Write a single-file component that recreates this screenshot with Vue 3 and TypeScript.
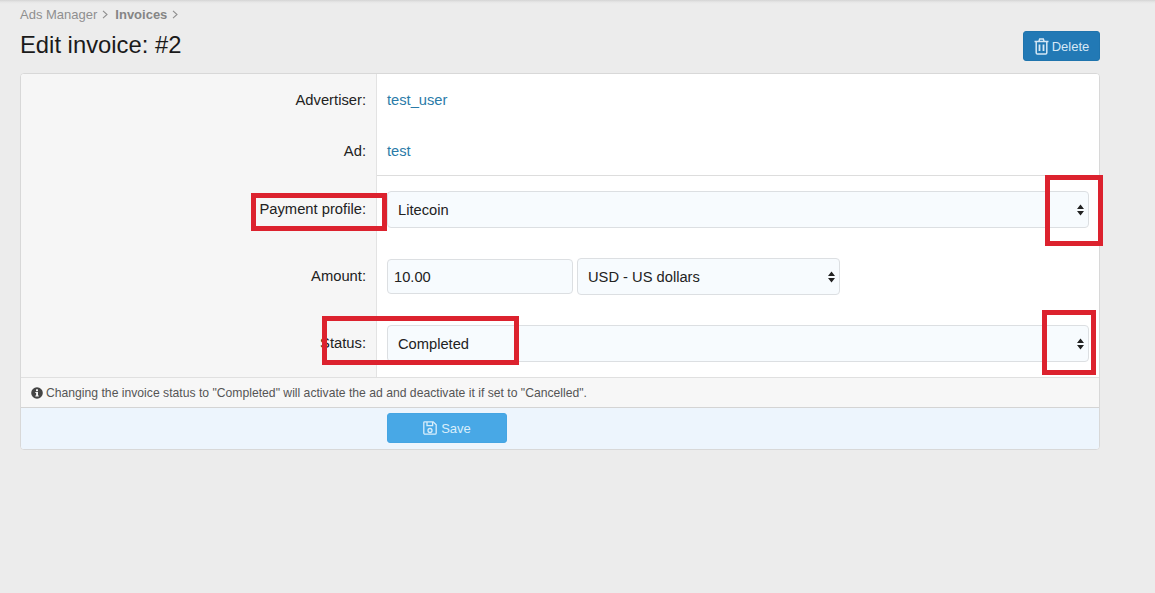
<template>
  <div class="page">
    <div class="crumbs">
      <span>Ads Manager</span>
      <svg class="chev" width="6" height="9" viewBox="0 0 6 9"><path d="M1 .8L5 4.5 1 8.2" /></svg>
      <b>Invoices</b>
      <svg class="chev" width="6" height="9" viewBox="0 0 6 9"><path d="M1 .8L5 4.5 1 8.2" /></svg>
    </div>
    <div class="head">
      <h1>Edit invoice: #2</h1>
      <button class="btn-delete" type="button">
        <svg width="15" height="17" viewBox="0 0 15 17" fill="none" stroke="currentColor" stroke-width="1.5">
          <path d="M.5 3.6h14M4.8 3.4l.9-2.4h3.6l.9 2.4M2.2 3.6v11.1c0 .8.5 1.4 1.2 1.4h8.2c.7 0 1.2-.6 1.2-1.4V3.6" />
          <path d="M5.5 6.5v6.5M9.5 6.5v6.5" stroke-width="1.8" />
        </svg>
        Delete
      </button>
    </div>

    <form class="card" @submit.prevent>
      <div class="rows">
        <div v-for="(item, i) in infoRows" :key="item.label" class="row info" :class="{ last: i === infoRows.length - 1 }">
          <label>{{ item.label }}:</label>
          <div class="value"><a href="#">{{ item.value }}</a></div>
        </div>
        <div class="row field">
          <label>Payment profile:</label>
          <div class="value">
            <div class="select wide">
              <select v-model="profile"><option>Litecoin</option></select>
              <svg class="arrows" width="7" height="12" viewBox="0 0 7 12"><path d="M3.5 0.5L7 5H0zM0 7h7l-3.5 4.5z" /></svg>
            </div>
          </div>
        </div>
        <div class="row field">
          <label>Amount:</label>
          <div class="value amount">
            <input v-model="amount" type="text" />
            <div class="select currency">
              <select v-model="currency"><option>USD - US dollars</option></select>
              <svg class="arrows" width="7" height="12" viewBox="0 0 7 12"><path d="M3.5 0.5L7 5H0zM0 7h7l-3.5 4.5z" /></svg>
            </div>
          </div>
        </div>
        <div class="row field">
          <label>Status:</label>
          <div class="value">
            <div class="select wide">
              <select v-model="status"><option>Completed</option></select>
              <svg class="arrows" width="7" height="12" viewBox="0 0 7 12"><path d="M3.5 0.5L7 5H0zM0 7h7l-3.5 4.5z" /></svg>
            </div>
          </div>
        </div>
      </div>
      <div class="note">
        <svg width="12" height="12" viewBox="0 0 12 12">
          <circle cx="6" cy="6" r="5.8" fill="#444" />
          <rect x="5" y="2.3" width="2" height="1.9" fill="#f7f7f7" />
          <path d="M4.3 5h2.7v3.6h.8v1H4.3v-1h.8V6h-.8z" fill="#f7f7f7" />
        </svg>
        Changing the invoice status to "Completed" will activate the ad and deactivate it if set to "Cancelled".
      </div>
      <div class="actions">
        <button class="btn-save" type="submit">
          <svg width="14" height="14" viewBox="0 0 14 14" fill="none" stroke="currentColor" stroke-width="1.3">
            <path d="M1.6.8h8.6l3 3v8.2c0 .7-.5 1.2-1.2 1.2H2c-.7 0-1.2-.5-1.2-1.2V1.6c0-.5.3-.8.8-.8z" />
            <path d="M4 1v3.6h5.6V1" />
            <circle cx="7" cy="9.5" r="2" />
          </svg>
          Save
        </button>
      </div>
    </form>

    <!-- annotations drawn on top of the screenshot -->
    <i class="mark" style="left: 251px; top: 193px; width: 136px; height: 38px"></i>
    <i class="mark" style="left: 1045px; top: 175px; width: 58px; height: 71px"></i>
    <i class="mark" style="left: 322px; top: 316px; width: 197px; height: 49px"></i>
    <i class="mark" style="left: 1042px; top: 310px; width: 54px; height: 65px"></i>
  </div>
</template>

<script setup lang="ts">
import { ref } from 'vue'

const infoRows = [
  { label: 'Advertiser', value: 'test_user' },
  { label: 'Ad', value: 'test' },
]

const profile = ref('Litecoin')
const amount = ref('10.00')
const currency = ref('USD - US dollars')
const status = ref('Completed')
</script>

<style>
html,
body {
  margin: 0;
  background: #ececec;
}
</style>

<style scoped>
.page {
  position: relative;
  height: 593px;
  overflow: hidden;
  padding: 0 55px 0 20px;
  box-sizing: border-box;
  font-family: "Liberation Sans", Arial, sans-serif;
  font-size: 14.7px;
  color: #222;
  background: linear-gradient(#d4d4d4, #e6e6e6 2px, #ececec 4px);
}

.crumbs {
  display: flex;
  align-items: center;
  gap: 5px;
  height: 14px;
  padding-top: 7px;
  padding-bottom: 1px;
  font-size: 13px;
  color: #8f8f8f;
}

.crumbs b {
  margin-left: 2px;
  color: #858585;
}

.chev {
  fill: none;
  stroke: #8f8f8f;
  stroke-width: 1.1;
}

.head {
  display: flex;
  justify-content: space-between;
  height: 51px;
}

h1 {
  margin: 6px 0 0;
  font-size: 23.8px;
  font-weight: 400;
  line-height: 34px;
  color: #1a1a1a;
}

.btn-delete {
  display: flex;
  align-items: center;
  justify-content: center;
  gap: 3px;
  width: 77px;
  height: 30px;
  margin-top: 9px;
  padding: 0;
  border: 1px solid #1f74ad;
  border-radius: 3px;
  background: #2279b5;
  color: #d6e8f5;
  font: 13px "Liberation Sans", Arial, sans-serif;
}

.card {
  width: 1080px;
  box-sizing: border-box;
  border: 1px solid #d8d8d8;
  border-radius: 4px;
  background: #fff;
  overflow: hidden;
}

.rows {
  background: linear-gradient(90deg, #f6f6f6 355px, #e3e3e3 355px, #e3e3e3 356px, #fff 356px);
}

.row {
  display: grid;
  grid-template-columns: 356px 1fr;
}

.info {
  height: 51px;
}

.info.last .value {
  padding-top: 1px;
  box-sizing: border-box;
  border-bottom: 1px solid #ddd;
}

.field {
  height: 67px;
}

label {
  align-self: center;
  padding-right: 11px;
  text-align: right;
  font-size: 14.75px;
}

.field label {
  margin-top: -1px;
}

.value {
  display: flex;
  align-items: center;
  padding-left: 10px;
}

a {
  color: #2a7ba8;
  text-decoration: none;
}

.amount {
  gap: 4px;
}

input,
select {
  box-sizing: border-box;
  height: 100%;
  border: 1px solid #dcdfe2;
  border-radius: 4px;
  background: #f7fbfe;
  color: #222;
  font: 14.7px "Liberation Sans", Arial, sans-serif;
  outline: none;
}

input {
  width: 186px;
  height: 35px;
  padding: 0 6px;
}

select {
  width: 100%;
  padding: 0 10px;
  appearance: none;
}

.select {
  position: relative;
  height: 37px;
}

.wide {
  width: 702px;
}

.currency {
  width: 263px;
}

.arrows {
  position: absolute;
  top: 12.5px;
  right: 5px;
  fill: #222;
}

.note {
  display: flex;
  align-items: center;
  gap: 3px;
  height: 29px;
  padding-left: 10px;
  border-top: 1px solid #e0e0e0;
  border-bottom: 1px solid #d4d4d4;
  background: #f7f7f7;
  font-size: 12.18px;
  color: #555;
}

.actions {
  height: 41px;
  padding: 5px 0 0 366px;
  box-sizing: border-box;
  background: #edf5fd;
}

.btn-save {
  display: flex;
  align-items: center;
  justify-content: center;
  gap: 4px;
  width: 120px;
  height: 30px;
  padding: 0;
  border: 1px solid #45a5e3;
  border-radius: 3px;
  background: #48a8e6;
  color: #d9eefb;
  font: 13px "Liberation Sans", Arial, sans-serif;
}

.mark {
  position: absolute;
  box-sizing: border-box;
  border: 5px solid #dc222e;
}
</style>
